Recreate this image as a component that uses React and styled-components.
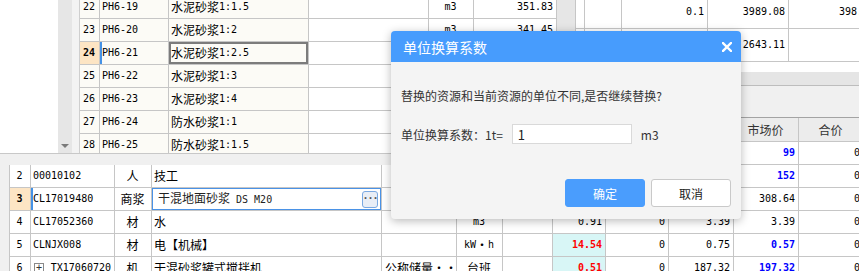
import React from "react";
import styled, { createGlobalStyle } from "styled-components";

const LINE = "#c6c6c6";
const MONO = `"DejaVu Sans Mono", "Liberation Mono", "Noto Sans CJK SC", monospace`;
const CJK = `"Noto Sans CJK SC", "Noto Sans", sans-serif`;

const GlobalStyle = createGlobalStyle`
  html, body { margin: 0; padding: 0; background: #fff; overflow: hidden; }
`;

const Page = styled.div`
  position: relative;
  width: 859px;
  height: 271px;
  overflow: hidden;
  background: #fff;
  font-family: ${MONO};
  color: #000;
`;

const Main = styled.div`
  display: flex;
  flex-direction: column;
`;

const UpperArea = styled.div`
  display: flex;
  height: 117px;
`;

const UnderPopup = styled.div`
  width: 576px;
  flex: none;
  background: #fff;
`;

const RightPane = styled.div`
  flex: 1;
  display: flex;
  flex-direction: column;
  overflow: hidden;
`;

const RightGrid = styled.div`
  margin-top: -4px;
`;

const Spacer = styled.div`
  height: 10px;
`;

const HScroll = styled.div`
  height: 14px;
  box-sizing: border-box;
  background: #e5e5e5;
  border-bottom: 1px solid #bdbdbd;
`;

const Gutter = styled.div`
  flex: 1;
  background: #f0f0f0;
`;

const Row = styled.div`
  display: flex;
  box-sizing: border-box;
  height: ${(p) => p.$h || 23}px;
  border-bottom: 1px solid ${LINE};
`;

const Cell = styled.div`
  box-sizing: border-box;
  flex: none;
  width: ${(p) => p.$w}px;
  height: 100%;
  display: flex;
  align-items: center;
  justify-content: ${(p) =>
    p.$align === "right" ? "flex-end" : p.$align === "center" ? "center" : "flex-start"};
  padding: 0 3px 0 ${(p) => (p.$pad ? 3 : 2)}px;
  border-right: 1px solid ${LINE};
  background: ${(p) => p.$bg || "transparent"};
  font-size: 10px;
  line-height: 14px;
  white-space: nowrap;
  overflow: hidden;
  color: ${(p) => p.$color || "#000"};
  font-weight: ${(p) => (p.$bold ? 700 : 400)};
  box-shadow: ${(p) => p.$shadow || "none"};
`;

const HeadCell = styled(Cell)`
  background: #ececec;
  color: #333;
`;

const Han = styled.span`
  font-family: ${CJK};
  font-size: 12px;
  line-height: 1;
`;

function Txt({ children }) {
  if (typeof children !== "string") return children;
  return children
    .split(/([\u3000-\u303f\u4e00-\u9fff\uff00-\uffef【】·]+)/)
    .map((part, i) => (i % 2 ? <Han key={i}>{part}</Han> : part));
}

/* dropdown list over the lower grid */
const Popup = styled.div`
  position: absolute;
  left: 0;
  top: 0;
  width: 576px;
  height: 165px;
  display: flex;
  flex-direction: column;
  background: #fff;
`;

const PopupBody = styled.div`
  display: flex;
  height: 153px;
  overflow: hidden;
`;

const TreeArea = styled.div`
  width: 58px;
  flex: none;
  background: #fff;
`;

const VScroll = styled.div`
  width: ${(p) => p.$w}px;
  flex: none;
  box-sizing: border-box;
  background: #e6e6e6;
  border-right: ${(p) => (p.$edge ? `1px solid ${LINE}` : "none")};
  display: flex;
  flex-direction: column;
  justify-content: flex-end;
  align-items: center;
  padding-bottom: 5px;
`;

const Arrow = styled.div`
  width: 0;
  height: 0;
  border-left: 4px solid transparent;
  border-right: 4px solid transparent;
  border-top: 4px solid #7a7a7a;
`;

const Splitter = styled.div`
  width: 7px;
  flex: none;
  background: #f3f3f3;
  border-right: 1px solid #cfcfcf;
`;

const UpperTable = styled.div`
  width: 477px;
  flex: none;
  overflow: hidden;
`;

const UpperRows = styled.div`
  margin-top: -4px;
`;

const PopupBand = styled.div`
  flex: 1;
  background: #f0f0f0;
  border-top: 1px solid #c8c8c8;
`;

/* lower grid */
const LowerTable = styled.div`
  display: flex;
  border-top: 1px solid #a3a3a3;
`;

const Strip = styled.div`
  width: 10px;
  flex: none;
  box-sizing: border-box;
  background: #f0f0f0;
  border-right: 1px solid ${LINE};
`;

const LowerRows = styled.div`
  flex: 1;
  display: flex;
  flex-direction: column;
`;

const PlusBox = styled.span`
  width: 11px;
  height: 11px;
  box-sizing: border-box;
  border: 1px solid #8a8a8a;
  margin: 0 7px 0 1px;
  display: inline-flex;
  align-items: center;
  justify-content: center;
  font-size: 10px;
  line-height: 1;
  color: #333;
`;

const EditText = styled.span`
  flex: 1;
  padding-left: 4px;
  color: #222;
`;

const DotsButton = styled.span`
  width: 16px;
  height: 17px;
  box-sizing: border-box;
  border: 1px solid #7aa9e2;
  border-radius: 3px;
  background: #e9eef6;
  display: inline-flex;
  align-items: center;
  justify-content: center;
  font-size: 10px;
  font-weight: 700;
  color: #555;
  letter-spacing: -1px;
`;

/* dialog */
const Dialog = styled.div`
  position: absolute;
  left: 391px;
  top: 31px;
  width: 350px;
  height: 188px;
  background: #f4f4f4;
  border-radius: 4px;
  box-shadow: 0 2px 10px rgba(0, 0, 0, 0.28);
  font-family: ${CJK};
  display: flex;
  flex-direction: column;
  overflow: hidden;
`;

const TitleBar = styled.div`
  height: 31px;
  flex: none;
  background: #479cfd;
  color: #fff;
  display: flex;
  align-items: center;
  justify-content: space-between;
  padding: 0 9px 0 12px;
  font-size: 14px;
`;

const DialogBody = styled.div`
  flex: 1;
  padding: 25px 10px 12px;
  display: flex;
  flex-direction: column;
`;

const Message = styled.div`
  font-size: 12px;
  line-height: 17px;
  color: #333;
`;

const FieldRow = styled.div`
  display: flex;
  align-items: center;
  margin-top: 20px;
  height: 20px;
  font-size: 12px;
  color: #333;
`;

const Input = styled.div`
  width: 120px;
  height: 20px;
  box-sizing: border-box;
  border: 1px solid #d9d9d9;
  background: #fff;
  margin-left: 9px;
  padding-left: 5px;
  display: flex;
  align-items: center;
  font-size: 13px;
  color: #222;
`;

const UnitText = styled.span`
  margin-left: 9px;
`;

const Buttons = styled.div`
  margin-top: auto;
  display: flex;
  justify-content: flex-end;
  gap: 6px;
`;

const Button = styled.div`
  width: 80px;
  height: 28px;
  box-sizing: border-box;
  border-radius: 3px;
  display: flex;
  align-items: center;
  justify-content: center;
  font-size: 12px;
  background: ${(p) => (p.$primary ? "#4a9dfd" : "#fff")};
  color: ${(p) => (p.$primary ? "#fff" : "#222")};
  border: 1px solid ${(p) => (p.$primary ? "#4a9dfd" : "#c9c9c9")};
`;

const CREAM = "#fcfbf6";
const PEACH = "#fde5c4";
const CYAN = "#d8f6f6";
const RED = "#ff0000";
const BLUE = "#0000ff";

const upperCols = [
  { w: 20, align: "center", bg: CREAM },
  { w: 69, bg: CREAM },
  { w: 140, bg: CREAM },
  { w: 120 },
  { w: 45, align: "center" },
  { w: 83, align: "right" },
];

// rows 24-28: unit and price sit under the dialog
const upperRows = [
  ["22", "PH6-19", "水泥砂浆1:1.5", "", "m3", "351.83"],
  ["23", "PH6-20", "水泥砂浆 1:2", "", "m3", "341.45"],
  ["24", "PH6-21", "水泥砂浆 1:2.5", "", "", ""],
  ["25", "PH6-22", "水泥砂浆 1:3", "", "", ""],
  ["26", "PH6-23", "水泥砂浆1:4", "", "", ""],
  ["27", "PH6-24", "防水砂浆1:1", "", "", ""],
  ["28", "PH6-25", "防水砂浆1:1.5", "", "", ""],
];

const rightCols = [
  { w: 9 },
  { w: 37, align: "right" },
  { w: 86, align: "right" },
  { w: 81, align: "right" },
  { w: 90, align: "right" },
];

const rightRows = [
  ["", "", "0.1", "3989.08", "398.91"],
  ["", "", "", "2643.11", ""],
];

const lowerCols = [
  { w: 21, align: "center" },
  { w: 84 },
  { w: 37, align: "center" },
  { w: 230 },
  { w: 75, pad: true },
  { w: 46, align: "center" },
  { w: 50, align: "right" },
  { w: 53, align: "right" },
  { w: 63, align: "right" },
  { w: 65, align: "right" },
  { w: 65, align: "right" },
  { w: 65, align: "right" },
];

// header and first rows are mostly hidden by the list and the dialog
const lowerHead = ["", "", "", "", "", "", "", "", "", "", "市场价", "合价"];

const lowerRows = [
  { cells: ["", "", "", "", "", "", "", "", "", "", "99", "0"], blue: [10] },
  { cells: ["2", "00010102", "人", "技工", "", "", "", "", "", "", "152", "0"], blue: [10] },
  { cells: ["3", "CL17019480", "商浆", "干混地面砂浆 DS M20", "", "", "", "", "", "", "308.64", "0"], active: true },
  { cells: ["4", "CL17052360", "材", "水", "", "m3", "", "0.91", "0", "3.39", "3.39", "0"] },
  { cells: ["5", "CLNJX008", "材", "电【机械】", "", "kW·h", "", "14.54", "0", "0.75", "0.57", "0"], red: [7], blue: [10] },
  { cells: ["6", "TX17060720", "机", "干混砂浆罐式搅拌机", "公称储量 ···", "台班", "", "0.51", "0", "187.32", "197.32", "0"], red: [7], blue: [10], plus: true },
];

function CloseIcon() {
  return (
    <svg width="10" height="10" viewBox="0 0 10 10">
      <path d="M1 1 L9 9 M9 1 L1 9" stroke="#fff" strokeWidth="2.4" strokeLinecap="square" />
    </svg>
  );
}

export default function App() {
  return (
    <Page>
      <GlobalStyle />
      <Main>
        <UpperArea>
          <UnderPopup />
          <RightPane>
            <RightGrid>
              {rightRows.map((r, ri) => (
                <Row key={ri} $h={33}>
                  {r.map((v, ci) => (
                    <Cell key={ci} $w={rightCols[ci].w} $align={rightCols[ci].align}>
                      <Txt>{v}</Txt>
                    </Cell>
                  ))}
                </Row>
              ))}
            </RightGrid>
            <Spacer />
            <HScroll />
            <Gutter />
          </RightPane>
        </UpperArea>

        <LowerTable>
          <Strip />
          <LowerRows>
            <Row $h={24}>
              {lowerHead.map((h, ci) => (
                <HeadCell key={ci} $w={lowerCols[ci].w} $align="center">
                  <Txt>{h}</Txt>
                </HeadCell>
              ))}
            </Row>
            {lowerRows.map((r, ri) => (
              <Row key={ri}>
                {r.cells.map((v, ci) => {
                  const col = lowerCols[ci];
                  const isRed = r.red && r.red.includes(ci);
                  const isBlue = r.blue && r.blue.includes(ci);
                  if (ci === 3 && r.active) {
                    return (
                      <Cell key={ci} $w={col.w} $shadow="inset 0 0 0 1px #4a92e6">
                        <EditText>
                          <Txt>{v}</Txt>
                        </EditText>
                        <DotsButton>···</DotsButton>
                      </Cell>
                    );
                  }
                  return (
                    <Cell
                      key={ci}
                      $w={col.w}
                      $align={col.align}
                      $pad={col.pad}
                      $bg={ci === 0 && r.active ? PEACH : isRed ? CYAN : undefined}
                      $bold={(ci === 0 && r.active) || isRed || isBlue}
                      $color={isRed ? RED : isBlue ? BLUE : undefined}
                      $shadow={ci === 1 && r.active ? "inset 2px 0 0 #4592e6" : undefined}
                    >
                      {ci === 1 && r.plus && <PlusBox>+</PlusBox>}
                      <Txt>{v}</Txt>
                    </Cell>
                  );
                })}
              </Row>
            ))}
          </LowerRows>
        </LowerTable>
      </Main>

      <Popup>
        <PopupBody>
          <TreeArea />
          <VScroll $w={14}>
            <Arrow />
          </VScroll>
          <Splitter />
          <UpperTable>
            <UpperRows>
              {upperRows.map((r, ri) => {
                const active = r[0] === "24";
                return (
                  <Row key={ri}>
                    {r.map((v, ci) => (
                      <Cell
                        key={ci}
                        $w={upperCols[ci].w}
                        $align={upperCols[ci].align}
                        $bg={ci === 0 && active ? PEACH : upperCols[ci].bg}
                        $bold={ci === 0 && active}
                        $shadow={
                          active && ci === 1
                            ? "inset 2px 0 0 #4592e6"
                            : active && ci === 2
                            ? "inset 0 0 0 2px #7c7c7c"
                            : undefined
                        }
                      >
                        <Txt>{v}</Txt>
                      </Cell>
                    ))}
                  </Row>
                );
              })}
            </UpperRows>
          </UpperTable>
          <VScroll $w={19} $edge />
        </PopupBody>
        <PopupBand />
      </Popup>

      <Dialog>
        <TitleBar>
          <span>单位换算系数</span>
          <CloseIcon />
        </TitleBar>
        <DialogBody>
          <Message>替换的资源和当前资源的单位不同,是否继续替换?</Message>
          <FieldRow>
            <span>单位换算系数：1t=</span>
            <Input>1</Input>
            <UnitText>m3</UnitText>
          </FieldRow>
          <Buttons>
            <Button $primary>确定</Button>
            <Button>取消</Button>
          </Buttons>
        </DialogBody>
      </Dialog>
    </Page>
  );
}
